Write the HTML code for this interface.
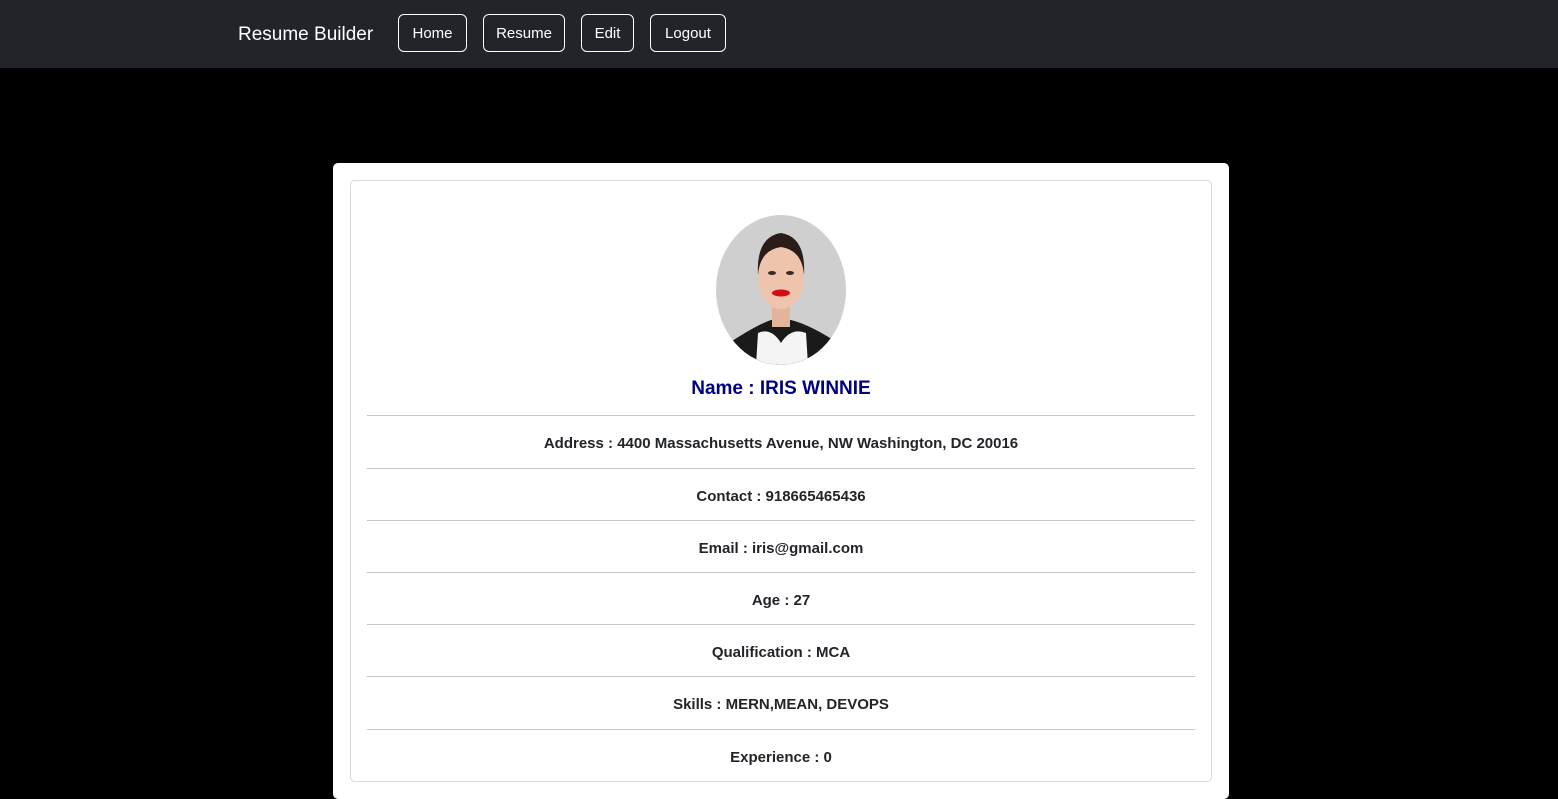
<!DOCTYPE html>
<html><head><meta charset="utf-8"><style>
*{box-sizing:border-box;margin:0;padding:0}
body{width:1558px;height:799px;background:#000;font-family:"Liberation Sans",sans-serif;overflow:hidden;position:relative}
.nav{position:absolute;left:0;top:0;width:1558px;height:68px;background:#212529}
.brand{position:absolute;left:238px;top:24px;color:#fff;font-size:19px}
.btn{position:absolute;top:14px;height:38px;border:1px solid #fff;border-radius:6px;color:#fff;font-size:15px;line-height:38px;text-align:center}
.card{position:absolute;left:333px;top:163px;width:896px;height:636px;background:#fff;border-radius:5px}
.inner{position:absolute;left:17px;top:17px;width:862px;height:602px;border:1px solid #d9d9d9;border-radius:5px}
.photo{position:absolute;left:365px;top:34px}
.name{position:absolute;left:0;width:100%;top:197px;text-align:center;color:#000080;font-size:19px;font-weight:bold}
.hr{position:absolute;left:16px;width:828px;height:1px;background:#c8c8c8}
.row{position:absolute;left:0;width:100%;text-align:center;font-size:15px;font-weight:bold;color:#212529}
</style></head><body>
<div class="nav">
<div class="brand">Resume Builder</div>
<div class="btn" style="left:398px;width:69px">Home</div>
<div class="btn" style="left:483px;width:82px">Resume</div>
<div class="btn" style="left:581px;width:53px">Edit</div>
<div class="btn" style="left:650px;width:76px">Logout</div>
</div>
<div class="card"><div class="inner">
<svg class="photo" width="130" height="150" viewBox="0 0 130 150">
<defs><clipPath id="c"><ellipse cx="65" cy="75" rx="65" ry="75"/></clipPath></defs>
<g clip-path="url(#c)">
<rect width="130" height="150" fill="#cfcfcf"/>
<path d="M10 130 Q40 110 55 105 L75 105 Q95 110 125 130 L130 150 L0 150Z" fill="#1a1a1a"/>
<path d="M40 150 L42 118 Q55 112 65 128 Q75 112 90 118 L92 150Z" fill="#f4f4f4"/>
<rect x="56" y="88" width="18" height="24" fill="#e2b49a"/>
<ellipse cx="65" cy="62" rx="23" ry="32" fill="#eec4ad"/>
<path d="M42 60 Q40 22 65 18 Q90 22 88 60 Q86 35 65 32 Q44 35 42 60Z" fill="#2a1c16"/>
<ellipse cx="65" cy="78" rx="9" ry="3.5" fill="#d01010"/>
<ellipse cx="56" cy="58" rx="4" ry="2" fill="#3a2a22"/><ellipse cx="74" cy="58" rx="4" ry="2" fill="#3a2a22"/>
</g></svg>
<div class="name">Name : IRIS WINNIE</div>
<div class="hr" style="top:234px"></div>
<div class="row" style="top:254px">Address : 4400 Massachusetts Avenue, NW Washington, DC 20016</div>
<div class="hr" style="top:287px"></div>
<div class="row" style="top:307px">Contact : 918665465436</div>
<div class="hr" style="top:339px"></div>
<div class="row" style="top:359px">Email : iris@gmail.com</div>
<div class="hr" style="top:391px"></div>
<div class="row" style="top:411px">Age : 27</div>
<div class="hr" style="top:443px"></div>
<div class="row" style="top:463px">Qualification : MCA</div>
<div class="hr" style="top:495px"></div>
<div class="row" style="top:515px">Skills : MERN,MEAN, DEVOPS</div>
<div class="hr" style="top:548px"></div>
<div class="row" style="top:568px">Experience : 0</div>
</div></div>
</body></html>
